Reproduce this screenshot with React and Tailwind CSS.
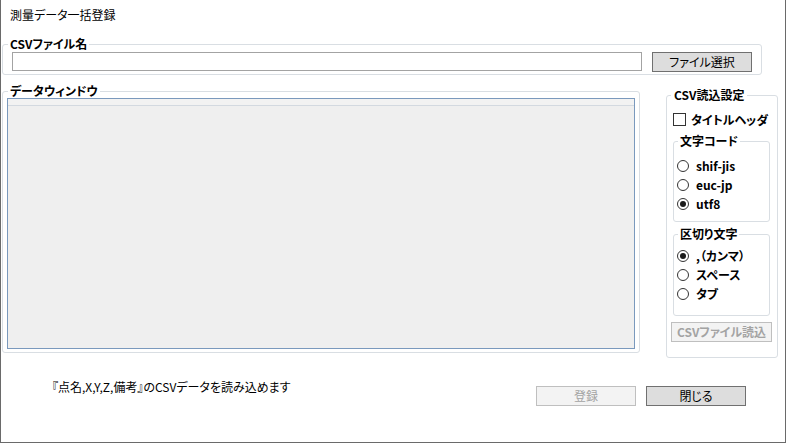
import { useState } from "react";

function Radio({ checked, label, onClick }) {
  return (
    <div className="flex items-center h-[19px] pl-[3px] cursor-default" onClick={onClick}>
      <span className="w-[12px] h-[12px] rounded-full border border-[#333333] bg-white flex items-center justify-center shrink-0">
        {checked && <span className="w-[6px] h-[6px] rounded-full bg-[#1a1a1a]" />}
      </span>
      <span className="ml-[7px] font-semibold">{label}</span>
    </div>
  );
}

export default function App() {
  const [header, setHeader] = useState(false);
  const [enc, setEnc] = useState("utf8");
  const [sep, setSep] = useState("comma");

  return (
    <div className="w-[786px] h-[443px] bg-white border-l border-r border-b border-[#6a6a6a] flex flex-col text-[12px] leading-[16px] text-black font-['Noto_Sans_CJK_JP',sans-serif] [font-feature-settings:'palt']">
      {/* Title */}
      <div className="pl-[9px] pt-[7px]">測量データ一括登録</div>

      {/* CSV file name */}
      <fieldset className="ml-[1px] w-[760px] mt-[13px] border border-[#d9dee3] rounded-[3px]">
        <legend className="ml-[5px] px-[2px] font-semibold">CSVファイル名</legend>
        <div className="flex items-start pl-[9px] pr-[9px] pb-[2px] gap-[10px]">
          <input className="w-[630px] h-[19px] border border-[#a3a3a3] bg-white outline-none px-1" />
          <button className="w-[100px] h-[20px] bg-[#dddddd] border border-[#707070] leading-[18px]">ファイル選択</button>
        </div>
      </fieldset>

      <div className="flex items-start mt-[8px]">
        {/* Data window */}
        <fieldset className="ml-[1px] w-[638px] border border-[#d9dee3] rounded-[3px]">
          <legend className="ml-[5px] px-[2px] font-semibold">データウィンドウ</legend>
          <div className="px-[4px] pb-[3px]">
            <div className="-mt-px h-[251px] border border-[#7a99bd] bg-[#efefef] flex flex-col">
              <div className="h-[7px] bg-[#f2f2f2] border-b border-[#d3d9e0]" />
              <div className="flex-1" />
            </div>
          </div>
        </fieldset>

        {/* CSV settings */}
        <fieldset className="ml-[26px] mt-[4px] w-[110px] border border-[#d9dee3] rounded-[3px]">
          <legend className="ml-[4px] px-[3px] font-semibold">CSV読込設定</legend>
          <div className="pl-[6px] pr-[5px] pb-[15px] flex flex-col">
            <div className="flex items-center mt-[10px] h-[13px] cursor-default" onClick={() => setHeader(!header)}>
              <span className="w-[13px] h-[13px] border border-[#333333] bg-white flex items-center justify-center text-[10px] leading-none">
                {header ? "✓" : ""}
              </span>
              <span className="ml-[5px] font-semibold">タイトルヘッダ</span>
            </div>

            <fieldset className="mt-[7px] w-[97px] border border-[#d9dee3] rounded-[3px]">
              <legend className="ml-[4px] px-[2px] font-semibold">文字コード</legend>
              <div className="pt-[7px] pb-[8px]">
                <Radio checked={enc === "sjis"} label="shif-jis" onClick={() => setEnc("sjis")} />
                <Radio checked={enc === "euc"} label="euc-jp" onClick={() => setEnc("euc")} />
                <Radio checked={enc === "utf8"} label="utf8" onClick={() => setEnc("utf8")} />
              </div>
            </fieldset>

            <fieldset className="mt-[4px] w-[97px] border border-[#d9dee3] rounded-[3px]">
              <legend className="ml-[4px] px-[2px] font-semibold">区切り文字</legend>
              <div className="pt-[4px] pb-[12px]">
                <Radio checked={sep === "comma"} label=",（カンマ）" onClick={() => setSep("comma")} />
                <Radio checked={sep === "space"} label="スペース" onClick={() => setSep("space")} />
                <Radio checked={sep === "tab"} label="タブ" onClick={() => setSep("tab")} />
              </div>
            </fieldset>

            <button disabled className="mt-[6px] -ml-[2px] w-[101px] h-[20px] bg-[#f3f3f3] border border-[#bfbfbf] text-[#a3a3a3] font-semibold leading-[18px]">
              CSVファイル読込
            </button>
          </div>
        </fieldset>
      </div>

      {/* Footer */}
      <div className="flex items-start mt-[21px]">
        <div className="pl-[51px]">『点名,X,Y,Z,備考』のCSVデータを読み込めます</div>
        <div className="ml-auto mr-[39px] mt-[7px] flex gap-[10px]">
          <button disabled className="w-[100px] h-[20px] bg-[#f3f3f3] border border-[#bfbfbf] text-[#a3a3a3] leading-[18px]">登録</button>
          <button className="w-[100px] h-[20px] bg-[#dddddd] border border-[#707070] leading-[18px]">閉じる</button>
        </div>
      </div>
    </div>
  );
}
